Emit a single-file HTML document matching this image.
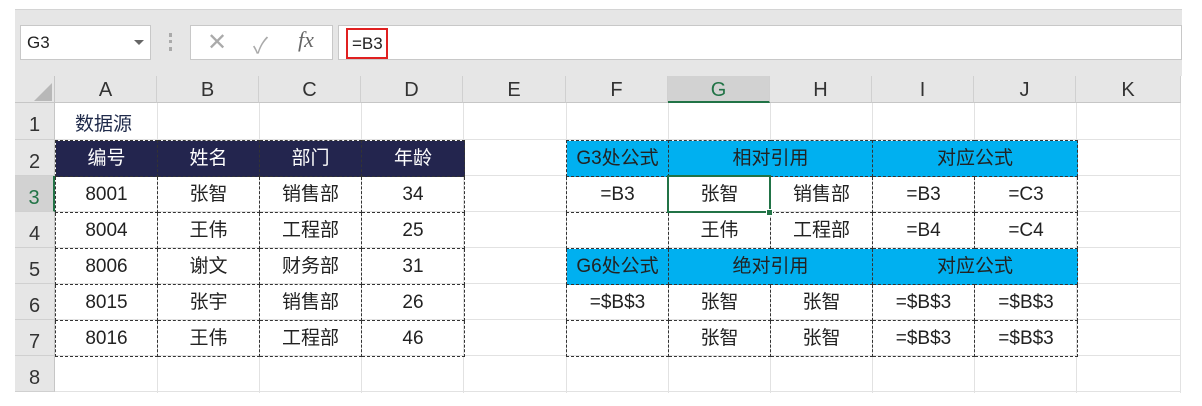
<!DOCTYPE html>
<html><head><meta charset="utf-8"><style>
*{margin:0;padding:0;box-sizing:border-box}
body{width:1202px;height:406px;background:#fff;position:relative;overflow:hidden;font-family:"Liberation Sans","Noto Sans CJK SC",sans-serif;color:#222}
.a{position:absolute}
.tb{left:15px;top:9px;width:1167px;height:67px;background:#e6e6e6;border-top:1px solid #d4d4d4}
.box{background:#fff;border:1px solid #c8c8c8}
.ch{top:76px;height:27px;background:#e6e6e6;border-right:1px solid #d0d0d0;border-bottom:1px solid #c6c6c6;font-size:20px;text-align:center;line-height:28px;color:#333}
.rh{left:15px;width:40px;height:36px;background:#e6e6e6;border-bottom:1px solid #d0d0d0;border-right:1px solid #c6c6c6;font-size:20px;text-align:center;line-height:44px;color:#333}
.vl{top:103px;height:290px;width:1px;background:#e2e2e2}
.hl{left:55px;width:1126px;height:1px;background:#e2e2e2}
table{position:absolute;border-collapse:collapse;table-layout:fixed}
td{border:1px dashed #333;height:36px;text-align:center;font-size:19px;padding:0;line-height:34px}
.dk td{background:#23254e;color:#fff}
td.cy{background:#00b0f0;color:#222}
</style></head><body>
<div class="a tb"></div>
<div class="a box" style="left:20px;top:25px;width:131px;height:35px;font-size:17px;line-height:33px;padding-left:6px">G3</div>
<div class="a" style="left:134px;top:40px;width:0;height:0;border-left:5px solid transparent;border-right:5px solid transparent;border-top:5px solid #666"></div>
<div class="a" style="left:169px;top:33px;width:3px;height:18px;border-left:3px dotted #aaa"></div>
<div class="a box" style="left:190px;top:25px;width:143px;height:35px"></div>
<div class="a" style="left:207px;top:28px;font-size:24px;color:#aaa">✕</div>
<div class="a" style="left:253px;top:28px;font-size:22px;color:#aaa">✓</div>
<div class="a" style="left:298px;top:27px;font-size:22px;color:#666;font-family:'Liberation Serif',serif;font-style:italic">fx</div>
<div class="a box" style="left:338px;top:25px;width:844px;height:35px"></div>
<div class="a" style="left:346px;top:28px;width:42px;height:31px;border:2px solid #e02020;font-size:17px;line-height:27px;padding-left:4px">=B3</div>
<div class="a" style="left:15px;top:76px;width:40px;height:27px;background:#e6e6e6;border-right:1px solid #c6c6c6;border-bottom:1px solid #c6c6c6"></div>
<div class="a" style="left:34px;top:83px;width:0;height:0;border-left:18px solid transparent;border-bottom:18px solid #b8b8b8"></div>
<div class="a ch" style="left:55px;width:102px">A</div>
<div class="a ch" style="left:157px;width:102px">B</div>
<div class="a ch" style="left:259px;width:102px">C</div>
<div class="a ch" style="left:361px;width:102px">D</div>
<div class="a ch" style="left:463px;width:103px">E</div>
<div class="a ch" style="left:566px;width:102px">F</div>
<div class="a ch" style="left:668px;width:102px;background:#d2d2d2;border-bottom:2px solid #217346;color:#217346">G</div>
<div class="a ch" style="left:770px;width:102px">H</div>
<div class="a ch" style="left:872px;width:102px">I</div>
<div class="a ch" style="left:974px;width:102px">J</div>
<div class="a ch" style="left:1076px;width:105px">K</div>
<div class="a rh" style="top:103px;height:37px">1</div>
<div class="a rh" style="top:140px">2</div>
<div class="a rh" style="top:176px;background:#d2d2d2;border-right:2px solid #217346;color:#217346">3</div>
<div class="a rh" style="top:212px">4</div>
<div class="a rh" style="top:248px">5</div>
<div class="a rh" style="top:284px">6</div>
<div class="a rh" style="top:320px">7</div>
<div class="a rh" style="top:356px">8</div>
<div class="a vl" style="left:157px"></div><div class="a vl" style="left:259px"></div><div class="a vl" style="left:361px"></div><div class="a vl" style="left:463px"></div><div class="a vl" style="left:566px"></div><div class="a vl" style="left:668px"></div><div class="a vl" style="left:770px"></div><div class="a vl" style="left:872px"></div><div class="a vl" style="left:974px"></div><div class="a vl" style="left:1076px"></div><div class="a vl" style="left:1180px"></div>
<div class="a hl" style="top:139px"></div><div class="a hl" style="top:175px"></div><div class="a hl" style="top:211px"></div><div class="a hl" style="top:247px"></div><div class="a hl" style="top:283px"></div><div class="a hl" style="top:319px"></div><div class="a hl" style="top:355px"></div><div class="a hl" style="top:391px"></div>
<div class="a" style="left:75px;top:109px;font-size:19px;color:#1f2a4a">数据源</div>
<table style="left:55px;top:140px;width:409px">
<colgroup><col style="width:102px"><col style="width:102px"><col style="width:102px"><col style="width:103px"></colgroup>
<tr class="dk"><td>编号</td><td>姓名</td><td>部门</td><td>年龄</td></tr>
<tr><td>8001</td><td>张智</td><td>销售部</td><td>34</td></tr>
<tr><td>8004</td><td>王伟</td><td>工程部</td><td>25</td></tr>
<tr><td>8006</td><td>谢文</td><td>财务部</td><td>31</td></tr>
<tr><td>8015</td><td>张宇</td><td>销售部</td><td>26</td></tr>
<tr><td>8016</td><td>王伟</td><td>工程部</td><td>46</td></tr>
</table>
<table style="left:566px;top:140px;width:511px">
<colgroup><col style="width:102px"><col style="width:102px"><col style="width:102px"><col style="width:102px"><col style="width:103px"></colgroup>
<tr><td class="cy">G3处公式</td><td class="cy" colspan="2">相对引用</td><td class="cy" colspan="2">对应公式</td></tr>
<tr><td>=B3</td><td>张智</td><td>销售部</td><td>=B3</td><td>=C3</td></tr>
<tr><td></td><td>王伟</td><td>工程部</td><td>=B4</td><td>=C4</td></tr>
<tr><td class="cy">G6处公式</td><td class="cy" colspan="2">绝对引用</td><td class="cy" colspan="2">对应公式</td></tr>
<tr><td>=$B$3</td><td>张智</td><td>张智</td><td>=$B$3</td><td>=$B$3</td></tr>
<tr><td></td><td>张智</td><td>张智</td><td>=$B$3</td><td>=$B$3</td></tr>
</table>
<div class="a" style="left:667px;top:175px;width:104px;height:38px;border:2px solid #217346"></div>
<div class="a" style="left:766px;top:209px;width:7px;height:7px;background:#217346;border:1px solid #fff"></div>
</body></html>
